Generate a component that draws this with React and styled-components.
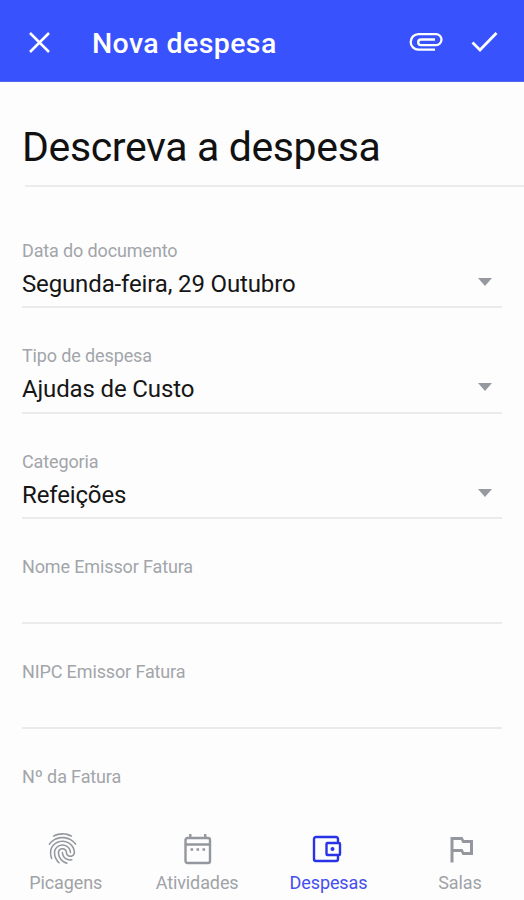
import React from "react"
import styled, { createGlobalStyle } from "styled-components"
import { MdFingerprint, MdOutlinedFlag } from "react-icons/md"

const GlobalStyle = createGlobalStyle`
    body {
        margin: 0;
        background: #fdfdfd;
        font-family: Roboto, sans-serif;
    }
`

const Screen = styled.div`
    display: flex;
    flex-direction: column;
    height: 900px;
    overflow: hidden;
`

const Header = styled.header`
    display: flex;
    align-items: center;
    flex: none;
    box-sizing: border-box;
    height: 82px;
    padding: 3px 26px 0 28px;
    background: #3852fd;
    border-bottom: 1px solid #5468ee;
    color: #fff;
`

const IconButton = styled.button`
    display: flex;
    padding: 0;
    border: none;
    background: none;
    color: inherit;
    margin-left: ${props => props.$gap || 0}px;
`

const Title = styled.h1`
    flex: 1;
    margin: 3px 0 0 41px;
    font-size: 28.5px;
    font-weight: 500;
    line-height: 34px;
    letter-spacing: 0.4px;
    white-space: nowrap;
`

const Form = styled.main`
    flex: 1;
    min-height: 0;
    overflow: hidden;
`

const Description = styled.div`
    margin-left: 25px;
    height: 103px;
    border-bottom: 2px solid #ececed;
    box-sizing: content-box;
`

const DescriptionText = styled.h2`
    margin: 0 0 0 -3px;
    padding-top: 41px;
    color: #111;
    font-size: 41px;
    font-weight: 400;
    line-height: 48px;
    letter-spacing: -0.37px;
    white-space: nowrap;
`

const Fields = styled.div`
    display: grid;
    grid-auto-rows: 105.3px;
    padding: 16px 22px 0;
`

const Field = styled.div`
    display: flex;
    flex-direction: column;
    box-sizing: border-box;
    padding-top: 37px;
    border-bottom: 2px solid #ebebec;
`

const Label = styled.span`
    color: #a2a5aa;
    font-size: 18px;
    line-height: 22px;
    letter-spacing: -0.13px;
`

const Value = styled.div`
    display: flex;
    align-items: center;
    justify-content: space-between;
    margin-top: 8px;
    padding-right: 10.5px;
    color: #161616;
    font-size: 24px;
    line-height: 28px;
    letter-spacing: -0.14px;
`

const Arrow = styled.span`
    border: 7.5px solid transparent;
    border-top: 8px solid #96999f;
    border-bottom: none;
    margin-top: -4px;
`

const Nav = styled.nav`
    display: flex;
    flex: none;
    height: 77px;
`

const Tab = styled.a`
    display: flex;
    flex: none;
    flex-direction: column;
    align-items: center;
    width: 131.4px;
    color: ${props => (props.$active ? "#2832e6" : "#94979d")};
`

const TabIcon = styled.div`
    display: flex;
    align-items: center;
    justify-content: center;
    height: 47px;
    padding-top: 2px;
    margin-left: ${props => props.$shift || 0}px;
`

const TabLabel = styled.span`
    font-size: 18px;
    line-height: 22px;
    letter-spacing: -0.1px;
    color: ${props => (props.$active ? "#4450ee" : "#a0a3a8")};
`

const CloseIcon = () => (
    <svg width="23" height="23" viewBox="0 0 23 23" fill="none" stroke="currentColor" strokeWidth="2.5">
        <path d="M2 2L21 21M21 2L2 21" />
    </svg>
)

const ClipIcon = () => (
    <svg width="34" height="20" viewBox="0 0 34 20" fill="none" stroke="currentColor" strokeWidth="2.3">
        <path d="M26 17.7H9.5a7.6 7.6 0 0 1 0-15.6H27a5.5 5.5 0 0 1 0 11H12a2.7 2.7 0 0 1 0-5.6H26" />
    </svg>
)

const CheckIcon = () => (
    <svg width="27" height="22" viewBox="0 0 27 22" fill="none" stroke="currentColor" strokeWidth="2.8">
        <path d="M1.5 11.5L9 19L25.5 2" />
    </svg>
)

const CalendarIcon = () => (
    <svg width="28" height="32" viewBox="0 0 28 32" fill="none" stroke="currentColor" strokeWidth="2.4">
        <rect x="1.5" y="5" width="24.5" height="25" rx="2" />
        <path d="M1.5 11.5H26M6.3 1v4M21.2 1v4" />
        <path d="M6.5 16.5h2.6M12.5 16.5h2.6M18.5 16.5h2.6" />
    </svg>
)

const WalletIcon = () => (
    <svg width="30" height="28" viewBox="0 0 30 28" fill="none" stroke="currentColor" strokeWidth="2.4">
        <path d="M26 7.5V4a2 2 0 0 0-2-2H4a2 2 0 0 0-2 2V24a2 2 0 0 0 2 2H24a2 2 0 0 0 2-2V20.5" />
        <rect x="14.5" y="8" width="13.5" height="12" rx="1" />
        <circle cx="20.5" cy="14" r="2" fill="currentColor" stroke="none" />
    </svg>
)

const fields = [
    { label: "Data do documento", value: "Segunda-feira, 29 Outubro" },
    { label: "Tipo de despesa", value: "Ajudas de Custo" },
    { label: "Categoria", value: "Refeições" },
    { label: "Nome Emissor Fatura" },
    { label: "NIPC Emissor Fatura" },
    { label: "Nº da Fatura" },
]

const tabs = [
    { label: "Picagens", icon: <MdFingerprint size={37} />, shift: -7 },
    { label: "Atividades", icon: <CalendarIcon />, shift: 1 },
    { label: "Despesas", icon: <WalletIcon />, shift: -2 },
    { label: "Salas", icon: <MdOutlinedFlag size={36} />, shift: 2 },
]

const App = () => {
    const [active, setActive] = React.useState("Despesas")

    return (
        <Screen>
            <GlobalStyle />
            <Header>
                <IconButton aria-label="Fechar"><CloseIcon /></IconButton>
                <Title>Nova despesa</Title>
                <IconButton aria-label="Anexar"><ClipIcon /></IconButton>
                <IconButton aria-label="Guardar" $gap={28}><CheckIcon /></IconButton>
            </Header>
            <Form>
                <Description>
                    <DescriptionText>Descreva a despesa</DescriptionText>
                </Description>
                <Fields>
                    {fields.map(field => (
                        <Field key={field.label}>
                            <Label>{field.label}</Label>
                            {field.value && <Value>{field.value}<Arrow /></Value>}
                        </Field>
                    ))}
                </Fields>
            </Form>
            <Nav>
                {tabs.map(tab => (
                    <Tab key={tab.label} $active={tab.label === active} onClick={() => setActive(tab.label)}>
                        <TabIcon $shift={tab.shift}>{tab.icon}</TabIcon>
                        <TabLabel $active={tab.label === active}>{tab.label}</TabLabel>
                    </Tab>
                ))}
            </Nav>
        </Screen>
    )
}

export default App
